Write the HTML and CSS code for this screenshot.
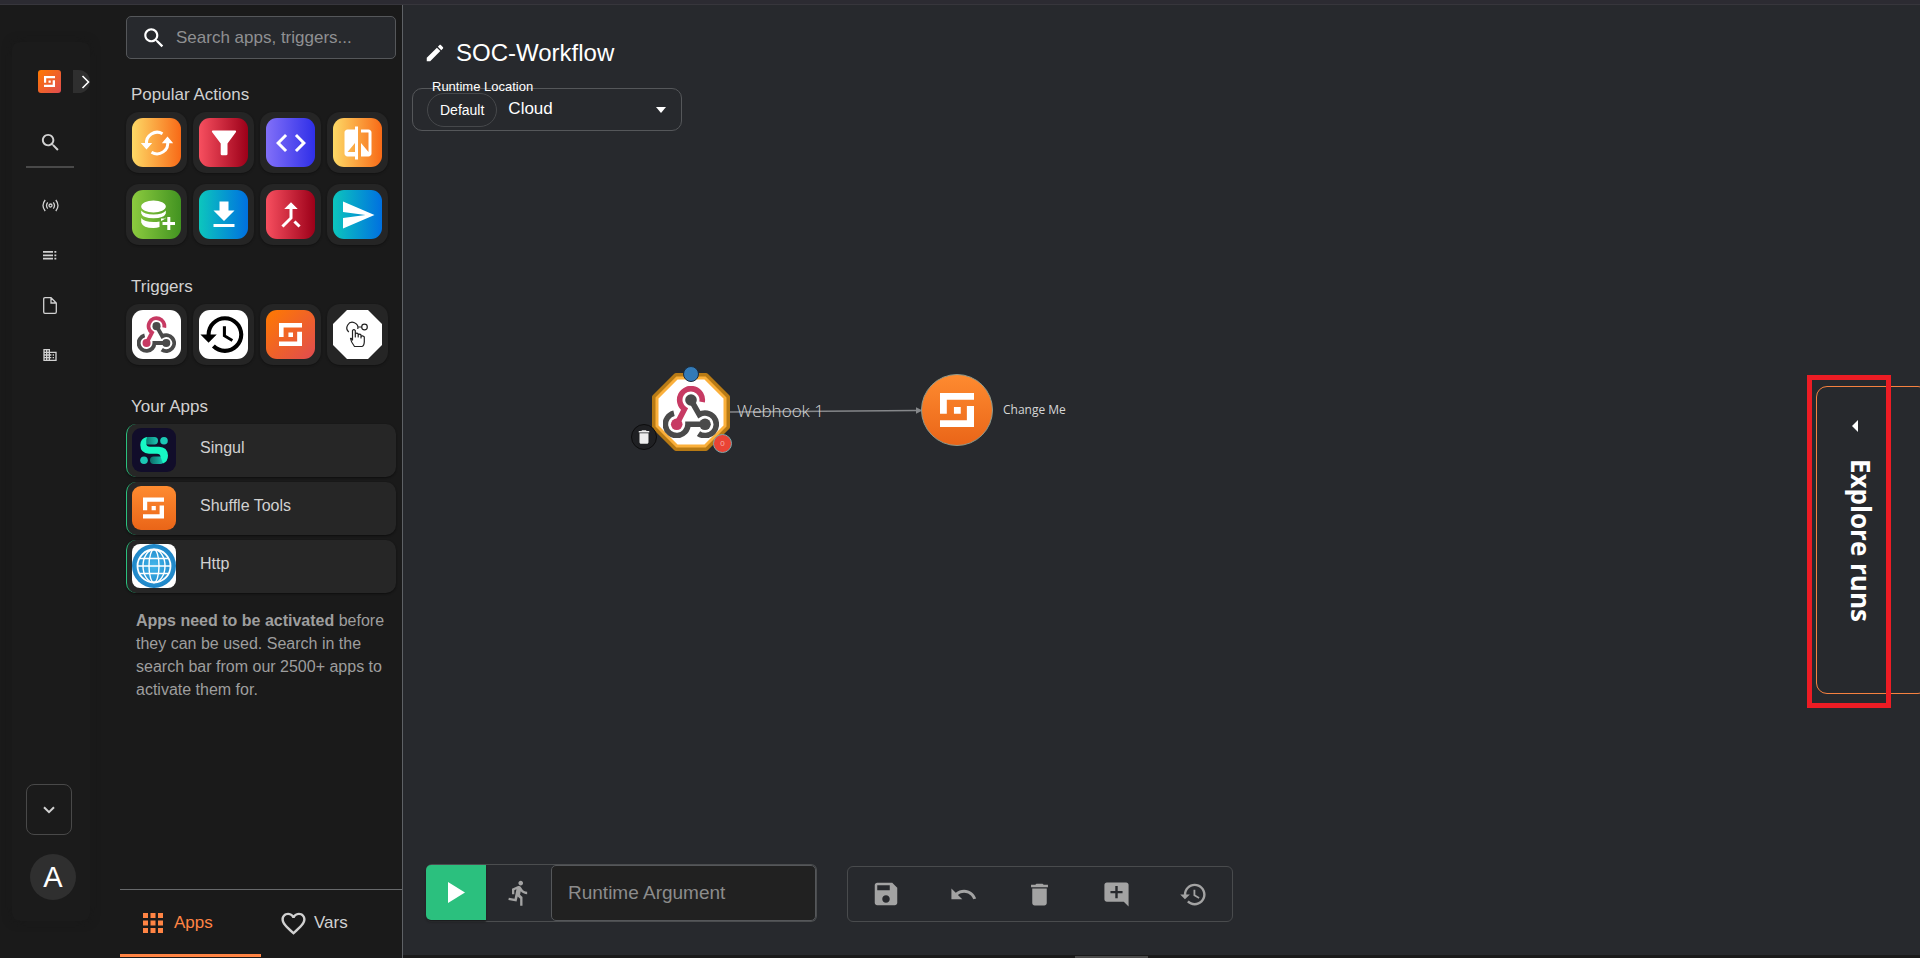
FILE: index.html
```html
<!DOCTYPE html>
<html lang="en">
<head>
<meta charset="utf-8">
<title>SOC-Workflow</title>
<link rel="stylesheet" href="styles.css">
</head>
<body>
<svg class="defs" width="0" height="0" aria-hidden="true">
  <defs>
    <linearGradient id="g-flame" x1="0" y1="0" x2="1" y2="1"><stop offset="0" stop-color="#ff7a00"/><stop offset="1" stop-color="#e04b50"/></linearGradient>
    <linearGradient id="g-amber" x1="0" y1="0" x2="0" y2="1"><stop offset="0" stop-color="#fe8b30"/><stop offset="1" stop-color="#ea6518"/></linearGradient>
    <linearGradient id="g-mint" x1="0" y1="0" x2="1" y2="0"><stop offset="0" stop-color="#0c6e68"/><stop offset="1" stop-color="#1bc7b5"/></linearGradient>
    <radialGradient id="g-globe"><stop offset="0" stop-color="#45b8ec"/><stop offset="1" stop-color="#1d84c6"/></radialGradient>
    <symbol id="i-search" viewBox="0 0 24 24"><path d="M15.5 14h-.79l-.28-.27C15.41 12.59 16 11.11 16 9.5 16 5.91 13.09 3 9.5 3S3 5.91 3 9.5 5.91 16 9.5 16c1.61 0 3.09-.59 4.23-1.57l.27.28v.79l5 4.99L20.49 19l-4.99-5zm-6 0C7.01 14 5 11.99 5 9.5S7.01 5 9.5 5 14 7.01 14 9.5 11.99 14 9.5 14z"/></symbol>
    <symbol id="i-trash" viewBox="0 0 24 24"><path d="M6 19c0 1.1.9 2 2 2h8c1.1 0 2-.9 2-2V7H6v12zM19 4h-3.5l-1-1h-5l-1 1H5v2h14V4z"/></symbol>
    <symbol id="i-history" viewBox="0 0 24 24"><path d="M13 3c-4.97 0-9 4.03-9 9H1l3.89 3.89.07.14L9 12H6c0-3.87 3.13-7 7-7s7 3.13 7 7-3.13 7-7 7c-1.93 0-3.68-.79-4.94-2.06l-1.42 1.42C8.27 19.99 10.51 21 13 21c4.97 0 9-4.03 9-9s-4.03-9-9-9zm-1 5v5l4.28 2.54.72-1.21-3.5-2.08V8H12z"/></symbol>
    <symbol id="i-shuffle" viewBox="0 0 100 100"><path d="M0 0H100V20H20V61H0ZM100 38V100H0V80H79V38ZM41 41H61V61H41Z"/></symbol>
    <symbol id="i-webhook" viewBox="0 0 56 52">
      <g fill="none" stroke-width="5.6">
        <path stroke="#4a4a4a" d="M11 27.3A11.3 11.3 0 1 0 25 38.3H42M28 14L36.3 28.6A11.3 11.3 0 1 1 35.5 47.6"/>
        <path stroke="#c73a63" d="M39.1 16A11.3 11.3 0 1 0 21.5 23.2L13.7 38.3"/>
      </g>
      <circle cx="28" cy="14" r="5.8" fill="#4a4a4a"/><circle cx="42" cy="38.3" r="5.8" fill="#4a4a4a"/><circle cx="13.7" cy="38.3" r="5.8" fill="#c73a63"/>
    </symbol>
  </defs>
</svg>

<div class="topline"></div>
<div class="layout">
  <nav class="rail" aria-label="Main">
    <div class="rail-card">
      <div class="brand">
        <a class="brand-logo" href="#" aria-label="Shuffle"><svg width="11" height="11"><use href="#i-shuffle"/></svg></a>
        <button class="expand" aria-label="Expand menu"><svg width="9" height="14" viewBox="0 0 9 14"><path d="M1.500 1L7.500 7L1.500 13" fill="none" stroke="#fff" stroke-width="1.600"/></svg></button>
      </div>
      <button class="rail-item rail-search" aria-label="Search"><svg width="23" height="23"><use href="#i-search"/></svg></button>
      <a class="rail-item" href="#" aria-label="Live"><svg width="17" height="13" viewBox="0 0 17 13"><g fill="none" stroke="currentColor" stroke-width="1.300"><circle cx="8.500" cy="6.500" r="1.500"/><path d="M5.700 3.300Q3.300 6.500 5.700 9.700M11.300 3.300Q13.700 6.500 11.300 9.700M3.200 1Q-1.200 6.500 3.200 12M13.800 1Q18.200 6.500 13.800 12"/></g></svg></a>
      <a class="rail-item" href="#" aria-label="Runs"><svg width="14" height="9" viewBox="0 0 14 9"><path d="M0 0h10v1.800H0zM0 3.400h10v1.800H0zM0 6.800h10v1.800H0zM11.400 0h1.900v1.800h-1.900zM11.400 3.400h1.900v1.800h-1.900zM11.400 6.800h1.900v1.800h-1.900z"/></svg></a>
      <a class="rail-item" href="#" aria-label="Files"><svg width="14" height="17" viewBox="0 0 14 17"><path d="M8 .7H2Q.7.700.7 2V15Q.7 16.300 2 16.300H12Q13.300 16.300 13.300 15V6ZM8 .7V6H13.300" fill="none" stroke="currentColor" stroke-width="1.300"/></svg></a>
      <a class="rail-item" href="#" aria-label="Organization"><svg width="16" height="16" viewBox="0 0 24 24"><path d="M12 7V3H2v18h20V7H12zM6 19H4v-2h2v2zm0-4H4v-2h2v2zm0-4H4V9h2v2zm0-4H4V5h2v2zm4 12H8v-2h2v2zm0-4H8v-2h2v2zm0-4H8V9h2v2zm0-4H8V5h2v2zm10 12h-8v-2h2v-2h-2v-2h2v-2h-2V9h8v10zm-2-8h-2v2h2v-2zm0 4h-2v2h2v-2z"/></svg></a>
      <button class="org" aria-label="Change organization"><svg width="12" height="8" viewBox="0 0 12 8"><path d="M1 1.200L6 6.200L11 1.200" fill="none" stroke="currentColor" stroke-width="2"/></svg></button>
      <button class="avatar">A</button>
    </div>
  </nav>

  <aside class="panel">
    <div class="panel-body">
      <label class="search"><svg width="26" height="26"><use href="#i-search"/></svg><input type="search" placeholder="Search apps, triggers..." aria-label="Search apps, triggers"></label>
      <h2>Popular Actions</h2>
      <div class="tiles">
        <button class="tile" aria-label="Repeat"><span class="art yellow"><svg width="34" height="34" viewBox="0 0 34 34"><g fill="none" stroke="#fff" stroke-width="3"><path d="M6.500 18A10.700 10.700 0 0 1 22.500 7.700M27.500 15A10.700 10.700 0 0 1 11.500 26.300"/></g><path d="M.8 17H12.200L6.500 23.500ZM21.800 17.200H33.200L27.500 10.500Z"/></svg></span></button>
        <button class="tile" aria-label="Filter"><span class="art red"><svg width="26" height="26" viewBox="0 0 26 26"><path d="M1.500.5H24.500Q25.500 1 25 2L16.500 13.500V24Q16.500 25.300 15 25.300H11Q9.700 25.300 9.700 24V13.500L1 2Q.5 1 1.500.5Z"/></svg></span></button>
        <button class="tile" aria-label="Execute code"><span class="art violet"><svg width="36" height="36" viewBox="0 0 24 24"><path d="M9.400 16.600L4.800 12l4.600-4.600L8 6l-6 6 6 6 1.400-1.400zm5.200 0l4.600-4.600-4.600-4.600L16 6l6 6-6 6-1.400-1.400z"/></svg></span></button>
        <button class="tile" aria-label="Compare"><span class="art yellow"><svg width="36" height="36" viewBox="0 0 24 24"><path d="M10 3H5c-1.100 0-2 .9-2 2v14c0 1.100.9 2 2 2h5v2h2V1h-2v2zm0 15H5l5-6v6zm9-15h-5v2h5v13l-5-6v9h5c1.100 0 2-.9 2-2V5c0-1.100-.9-2-2-2z"/></svg></span></button>
        <button class="tile" aria-label="Store data"><span class="art green"><svg width="36" height="32" viewBox="0 0 36 32"><ellipse cx="14.500" cy="7.500" rx="12.300" ry="6"/><path d="M2.200 11.500Q5 15.500 14.500 15.500T26.800 11.500V14.500Q25 19.300 14.500 19.300T2.200 14.500ZM2.200 19Q5 23 14.500 23Q18 23 20.500 22.400V28Q18 29 14.500 29Q4 29 2.200 23.500ZM28.300 18H31.300V23H36V26H31.300V31H28.300V26H23.500V23H28.300ZM22 21.900Q26.800 20.500 26.800 17.500V19.500H22Z"/></svg></span></button>
        <button class="tile" aria-label="Download"><span class="art teal"><svg width="36" height="36" viewBox="0 0 24 24"><path d="M19 9h-4V3H9v6H5l7 7 7-7zM5 18v2h14v-2H5z"/></svg></span></button>
        <button class="tile" aria-label="Merge"><span class="art red"><svg width="36" height="36" viewBox="0 0 24 24"><path d="M17 20.410L18.410 19 15 15.590 13.590 17 17 20.410zM7.500 8H11v5.590L5.590 19 7 20.410l6-6V8h3.500L12 3.500 7.500 8z"/></svg></span></button>
        <button class="tile" aria-label="Send"><span class="art teal"><svg width="36" height="36" viewBox="0 0 24 24"><path d="M2.010 21L23 12 2.010 3 2 10l15 2-15 2z"/></svg></span></button>
      </div>
      <h2>Triggers</h2>
      <div class="tiles">
        <button class="tile" aria-label="Webhook"><span class="art white"><svg width="39" height="37"><use href="#i-webhook"/></svg></span></button>
        <button class="tile" aria-label="Schedule"><span class="art white dark"><svg width="49" height="49" viewBox="0.300 0 24 24"><use href="#i-history" width="24" height="24"/></svg></span></button>
        <button class="tile" aria-label="Subflow"><span class="art flame"><svg width="23" height="23"><use href="#i-shuffle"/></svg></span></button>
        <button class="tile" aria-label="User input"><svg width="49" height="49" viewBox="0 0 49 49"><path d="M14 0H35L49 14V35L35 49H14L0 35V14Z" fill="#fff"/><g fill="none" stroke="#222" stroke-width="1.200" stroke-linejoin="round"><circle cx="31.500" cy="17" r="2.800"/><path d="M25 17H28.700M15.800 22A5.500 5.500 0 1 1 24.800 19"/><path d="M19.500 30V20.500Q20.800 18.600 22.300 20.500V27V24Q23.700 22.300 25.200 24V27V25Q26.700 23.400 28 25V28V26.500Q29.500 25 31.300 27V32Q31 36 29 36.500H21.500Q18 32 17.500 28.500Q18 27.500 19.500 30Z"/></g></svg></button>
      </div>
      <h2>Your Apps</h2>
      <div class="apps">
        <button class="app"><svg width="44" height="44" viewBox="0 0 44 44"><rect width="44" height="44" rx="9" fill="#110d2a"/><rect x="12" y="9" width="14" height="7.500" rx="3.700" fill="url(#g-mint)"/><circle cx="32" cy="12.800" r="3.800" fill="#1bc7b5"/><rect x="18" y="28.500" width="14" height="7.500" rx="3.700" fill="url(#g-mint)"/><circle cx="12" cy="32.300" r="3.800" fill="#1bc7b5"/><path d="M15 9Q8.300 10.500 8.300 17Q8.500 25.500 17 25.700H25Q28.300 26 28.500 28.500L31 35.500Q36 33.500 36 27.500Q35.500 19 27 18.700H18Q14.500 18.500 14.300 16Q14 11 15 9Z" fill="#17f7c4"/></svg>Singul</button>
        <button class="app"><svg width="44" height="44" viewBox="0 0 44 44"><rect width="44" height="44" rx="9" fill="url(#g-amber)"/><use href="#i-shuffle" x="11" y="11" width="21" height="22" fill="#fff"/></svg>Shuffle Tools</button>
        <button class="app"><svg width="44" height="44" viewBox="0 0 44 44"><rect width="44" height="44" rx="8" fill="#fff"/><circle cx="22" cy="22" r="22" fill="url(#g-globe)"/><g fill="none" stroke="#fff" stroke-width="1.400"><circle cx="22" cy="22" r="16.500" stroke-width="1.800"/><ellipse cx="22" cy="22" rx="11" ry="16.500"/><ellipse cx="22" cy="22" rx="5" ry="16.500"/><path d="M5.500 22H38.500M8 14.500H36M8 29.500H36"/></g></svg>Http</button>
      </div>
      <p class="note"><strong>Apps need to be activated</strong> before they can be used. Search in the search bar from our 2500+ apps to activate them for.</p>
    </div>
    <div class="tabs" role="tablist">
      <button class="tab active" role="tab" aria-selected="true"><svg width="20" height="20" viewBox="0 0 20 20"><path d="M0 0h5v5H0zM7.500 0h5v5h-5zM15 0h5v5h-5zM0 7.500h5v5H0zM7.500 7.500h5v5h-5zM15 7.500h5v5h-5zM0 15h5v5H0zM7.500 15h5v5h-5zM15 15h5v5h-5z"/></svg>Apps</button>
      <button class="tab vars" role="tab" aria-selected="false"><svg width="29" height="29" viewBox="0 0 24 24"><path d="M16.500 3c-1.740 0-3.410.81-4.500 2.090C10.910 3.810 9.240 3 7.500 3 4.420 3 2 5.420 2 8.500c0 3.780 3.400 6.860 8.550 11.540L12 21.350l1.450-1.320C18.600 15.360 22 12.280 22 8.500 22 5.420 19.580 3 16.500 3zm-4.400 15.550l-.1.100-.1-.1C7.140 14.240 4 11.390 4 8.500 4 6.500 5.500 5 7.500 5c1.540 0 3.040.99 3.570 2.360h1.870C13.460 5.990 14.960 5 16.500 5c2 0 3.500 1.500 3.500 3.500 0 2.890-3.140 5.740-7.900 10.050z"/></svg>Vars</button>
    </div>
  </aside>

  <main class="canvas">
    <header class="title">
      <button class="icon-button" aria-label="Edit name"><svg width="22" height="22" viewBox="0 0 24 24"><path d="M3 17.250V21h3.750L17.810 9.940l-3.750-3.750L3 17.250zM20.710 7.040c.39-.39.39-1.020 0-1.410l-2.340-2.340c-.39-.39-1.020-.39-1.410 0l-1.830 1.830 3.750 3.750 1.830-1.830z"/></svg></button>
      <h1>SOC-Workflow</h1>
    </header>
    <div class="location">
      <label class="location-label" for="location">Runtime Location</label>
      <span class="chip">Default</span>
      <select id="location"><option>Cloud</option></select>
      <svg class="caret" width="10" height="6" viewBox="0 0 10 6"><path d="M0 0H10L5 6Z"/></svg>
    </div>

    <div class="graph">
      <svg class="edge" width="194" height="12" viewBox="0 0 194 12"><path d="M0 7L187 5.500" stroke="#85878a" stroke-width="1.500"/><path d="M187 2.200L193.500 5.500L187 8.800Z" fill="#85878a"/></svg>
      <svg class="node hook" width="78" height="78" viewBox="0 0 78 78"><path d="M24 2.500H54L75.500 24V54L54 75.500H24L2.500 54V24Z" fill="#fff" stroke="#b87a14" stroke-width="5" stroke-linejoin="round"/><path d="M25 5H53L73 25V53L53 73H25L5 53V25Z" fill="#fff" stroke="#fbb03b" stroke-width="3"/><use href="#i-webhook" x="11" y="13" width="56" height="52"/></svg>
      <span class="node-label hook-label">Webhook 1</span>
      <svg class="node change" width="72" height="72" viewBox="0 0 72 72"><circle cx="36" cy="36" r="35.500" fill="url(#g-amber)" stroke="#8f9a8c" stroke-width="1"/><use href="#i-shuffle" x="19" y="19" width="34" height="34" fill="#fff"/></svg>
      <span class="node-label change-label">Change Me</span>
      <span class="dot"></span>
      <button class="remove" aria-label="Delete node"><svg width="18" height="18"><use href="#i-trash"/></svg></button>
      <span class="count">0</span>
    </div>

    <button class="explore"><svg width="6" height="12" viewBox="0 0 6 12"><path d="M6 0V12L0 6Z"/></svg><span>Explore runs</span></button>
    <div class="highlight"></div>

    <footer class="controls">
      <div class="runbar">
        <button class="play" aria-label="Run workflow"><svg width="17" height="21" viewBox="0 0 17 21"><path d="M0 0L17 10.500L0 21Z"/></svg></button>
        <button class="runner" aria-label="Start from node"><svg width="28" height="28" viewBox="0 0 24 24"><path d="M13.490 5.480c1.100 0 2-.9 2-2s-.9-2-2-2-2 .9-2 2 .9 2 2 2zm-3.600 13.900l1-4.400 2.100 2v6h2v-7.500l-2.100-2 .6-3c1.300 1.500 3.300 2.500 5.500 2.500v-2c-1.900 0-3.500-1-4.300-2.400l-1-1.600c-.4-.6-1-1-1.700-1-.3 0-.5.1-.8.1l-5.200 2.200v4.700h2v-3.400l1.800-.7-1.600 8.100-4.900-1-.4 2 7 1.400z"/></svg></button>
        <input class="argument" type="text" placeholder="Runtime Argument" aria-label="Runtime Argument">
      </div>
      <div class="toolbar">
        <button class="icon-button" aria-label="Save"><svg width="30" height="30" viewBox="0 0 24 24"><path d="M17 3H5c-1.110 0-2 .9-2 2v14c0 1.100.89 2 2 2h14c1.100 0 2-.9 2-2V7l-4-4zm-5 16c-1.660 0-3-1.340-3-3s1.340-3 3-3 3 1.340 3 3-1.340 3-3 3zm3-10H5V5h10v4z"/></svg></button>
        <button class="icon-button" aria-label="Undo"><svg width="29" height="29" viewBox="0 0 24 24"><path d="M12.500 8c-2.650 0-5.050.99-6.900 2.600L2 7v9h9l-3.620-3.620c1.390-1.160 3.160-1.880 5.120-1.880 3.540 0 6.550 2.310 7.600 5.500l2.370-.78C21.080 11.030 17.150 8 12.500 8z"/></svg></button>
        <button class="icon-button" aria-label="Delete"><svg width="29" height="29"><use href="#i-trash"/></svg></button>
        <button class="icon-button" aria-label="Add comment"><svg width="29" height="29" viewBox="0 0 24 24"><path d="M22 4c0-1.100-.9-2-2-2H4c-1.100 0-2 .9-2 2v12c0 1.100.9 2 2 2h14l4 4V4zm-5 7h-4v4h-2v-4H7V9h4V5h2v4h4v2z"/></svg></button>
        <button class="icon-button" aria-label="History"><svg width="29" height="29"><use href="#i-history"/></svg></button>
      </div>
    </footer>
    <div class="scroll-thumb"></div>
  </main>
</div>
</body>
</html>
```

FILE: styles.css
```css
* { box-sizing: border-box; }
html, body { height: 100%; }
body {
  margin: 0;
  display: flex;
  flex-direction: column;
  overflow: hidden;
  background: #1a1a1a;
  color: #d1d1d1;
  font-family: "Liberation Sans", Arial, sans-serif;
  font-size: 17px;
}
button, input, select { font: inherit; color: inherit; }
button { margin: 0; padding: 0; border: 0; background: none; }
svg { display: block; fill: currentColor; flex: none; }
.defs { position: absolute; }

.topline { flex: none; height: 5px; background: #2c2b32; border-bottom: 1px solid #37363c; }
.layout { flex: 1; min-height: 0; display: flex; }

/* Icon rail */
.rail { flex: none; width: 120px; padding: 37px 31px 37px 12px; display: flex; }
.rail-card {
  flex: 1;
  display: flex;
  flex-direction: column;
  border-radius: 8px;
  background: #1b1b1b;
  box-shadow: 0 0 10px #181818;
  padding: 27px 0 21px;
}
.brand { display: flex; align-items: center; gap: 12px; padding-left: 26px; margin-bottom: 24px; height: 25px; }
.brand-logo { width: 23px; height: 23px; display: grid; place-items: center; color: #fff; border-radius: 3px; background: linear-gradient(135deg, #ff7a00, #e04b50); }
.expand { width: 17px; height: 23px; background: #2f2f2f; border-radius: 0 12px 12px 0; display: flex; align-items: center; justify-content: flex-end; }
.rail-item { flex: none; width: 48px; height: 50px; margin-left: 14px; display: grid; place-items: center; color: #d1d1d1; }
.rail-search { border-bottom: 2px solid #494949; margin-bottom: 12px; }
.org { width: 46px; height: 51px; margin: auto 0 19px 14px; border: 1px solid #494949; border-radius: 8px; display: grid; place-items: center; }
.avatar { width: 46px; height: 46px; margin-left: 18px; border-radius: 50%; background: #2f2f2f; color: #fff; font-size: 29px; }

/* Apps panel */
.panel { flex: none; width: 283px; display: flex; flex-direction: column; border-right: 1px solid #5e6165; padding-bottom: 1px; }
.panel-body { flex: 1; min-height: 0; padding: 11px 6px 0; }
.search { display: flex; align-items: center; gap: 9px; height: 43px; padding: 0 14px; background: #27292d; border: 1px solid #55575a; border-radius: 5px; color: #fff; }
.search input { flex: 1; min-width: 0; border: 0; padding: 0; background: none; outline: 0; }
.search input::placeholder { color: #8f9092; opacity: 1; }
h2 { margin: 26px 0 7px 5px; font-size: 17px; line-height: 20px; font-weight: 400; }
.tiles { display: grid; grid-template-columns: repeat(4, 61px); gap: 11px 6px; }
.tiles + h2 { margin-top: 32px; }
.tile { width: 61px; height: 61px; border-radius: 13px; background: #252525; display: grid; place-items: center; box-shadow: 0 1px 2px #121212; }
.art { width: 49px; height: 49px; border-radius: 11px; display: grid; place-items: center; overflow: hidden; color: #fff; }
.yellow { background: linear-gradient(90deg, #fdd966, #f86a17); }
.red { background: linear-gradient(90deg, #f74f5f, #9c0019); }
.violet { background: linear-gradient(90deg, #8270f8, #2f2fe8); }
.green { background: linear-gradient(90deg, #8ccb3f, #429321); }
.teal { background: linear-gradient(90deg, #0cc6bd, #0070e0); }
.flame { background: linear-gradient(135deg, #ff7a00, #e04b50); }
.white { background: #fff; }
.dark { color: #000; }
.apps { display: flex; flex-direction: column; gap: 5px; }
.app { height: 53px; display: flex; align-items: center; gap: 24px; padding: 0 5px 5px; background: #262626; border-left: 1px solid #2bc07e; border-radius: 10px; box-shadow: 0 1px 2px #0e0e0e; font-size: 16px; }
.app svg { position: relative; top: 2px; }
.note { margin: 16px 8px 0 10px; font-size: 16px; line-height: 23px; color: #9e9e9e; }
.tabs { display: flex; height: 68px; border-top: 1px solid #67696b; }
.tab { width: 50%; display: flex; align-items: center; gap: 11px; padding: 2px 0 0 23px; border-bottom: 3px solid transparent; }
.tab.active { color: #ff8444; border-color: #ff8444; }
.tab.vars { gap: 6px; padding-left: 18px; }

/* Workflow canvas */
.canvas { position: relative; flex: 1; min-width: 0; margin-bottom: 3px; padding: 33px 9px 33px; background: #27292d; color: #fff; display: flex; flex-direction: column; }
.title { display: flex; align-items: center; gap: 10px; padding-left: 12px; }
h1 { margin: 0; font-size: 24px; line-height: 30px; font-weight: 400; }
.location { position: relative; display: flex; align-items: center; width: 270px; height: 43px; margin-top: 20px; padding: 0 15px 0 14px; border: 1px solid #55575a; border-radius: 10px; }
.location-label { position: absolute; left: 19px; top: -10px; font-size: 13px; line-height: 16px; }
.chip { flex: none; height: 34px; padding: 0 12px; border: 1px solid #46484b; border-radius: 17px; font-size: 14px; line-height: 32px; }
.location select { flex: 1; min-width: 0; appearance: none; border: 0; padding: 0 0 3px 11px; background: none; outline: 0; }

.node, .edge, .node-label, .dot, .remove, .count { position: absolute; }
.node-label { font-family: "Open Sans", "Noto Sans", sans-serif; color: #d6d6d6; line-height: 24px; white-space: nowrap; }
.edge { left: 326px; top: 400px; fill: none; }
.hook { left: 249px; top: 368px; }
.hook-label { left: 334px; top: 394px; font-size: 17px; font-weight: 300; }
.change { left: 518px; top: 369px; }
.change-label { left: 600px; top: 393px; font-size: 12px; }
.dot { left: 280px; top: 361px; width: 16px; height: 16px; border-radius: 50%; background: #337ab7; border: 1px solid #1b2a3a; }
.remove { left: 228px; top: 419px; width: 26px; height: 26px; border-radius: 50%; background: #1f2023; border: 1px solid #0c0c0d; display: grid; place-items: center; color: #eee; }
.count { left: 310px; top: 429px; width: 19px; height: 19px; border-radius: 50%; background: #ea4335; border: 1px solid #7fa6a8; color: #f6b0aa; font-size: 8px; line-height: 17px; text-align: center; }

.explore { position: absolute; right: -9px; top: 381px; width: 113px; height: 308px; border: 1px solid #f68140; border-radius: 11px; display: flex; flex-direction: column; align-items: flex-start; gap: 27px; padding: 33px 0 0 28px; clip-path: inset(0 9px 0 0); }
.explore svg { margin-left: 7px; }
.explore span { writing-mode: vertical-rl; font-family: "Open Sans", "Noto Sans", sans-serif; font-size: 26px; font-weight: 700; line-height: 32px; }
.highlight { position: absolute; right: 29px; top: 370px; width: 84px; height: 333px; border: 5px solid #ed1c24; pointer-events: none; }

.controls { display: flex; align-items: flex-end; gap: 30px; margin-top: auto; padding-left: 14px; color: #a3a3a3; }
.runbar { display: flex; height: 58px; border: 1px solid #4b4d4f; border-left: 0; border-radius: 6px; }
.play { width: 60px; height: 55px; display: grid; place-items: center; background: #2bc07e; color: #fff; border-radius: 5px 0 0 5px; box-shadow: 0 2px 2px #1b1c1e; }
.runner { width: 65px; display: grid; place-items: center; }
.argument { width: 265px; padding: 0 16px; border: 1px solid #55575a; border-radius: 5px; background: #212121; outline: 0; font-size: 19px; }
.argument::placeholder { color: #8c8c8c; opacity: 1; }
.toolbar { display: flex; width: 386px; height: 56px; border: 1px solid #494b4d; border-radius: 6px; }
.toolbar .icon-button { flex: 1; display: grid; place-items: center; }
.scroll-thumb { position: absolute; left: 672px; bottom: -3px; width: 73px; height: 2px; background: #4c4c4c; }
```
